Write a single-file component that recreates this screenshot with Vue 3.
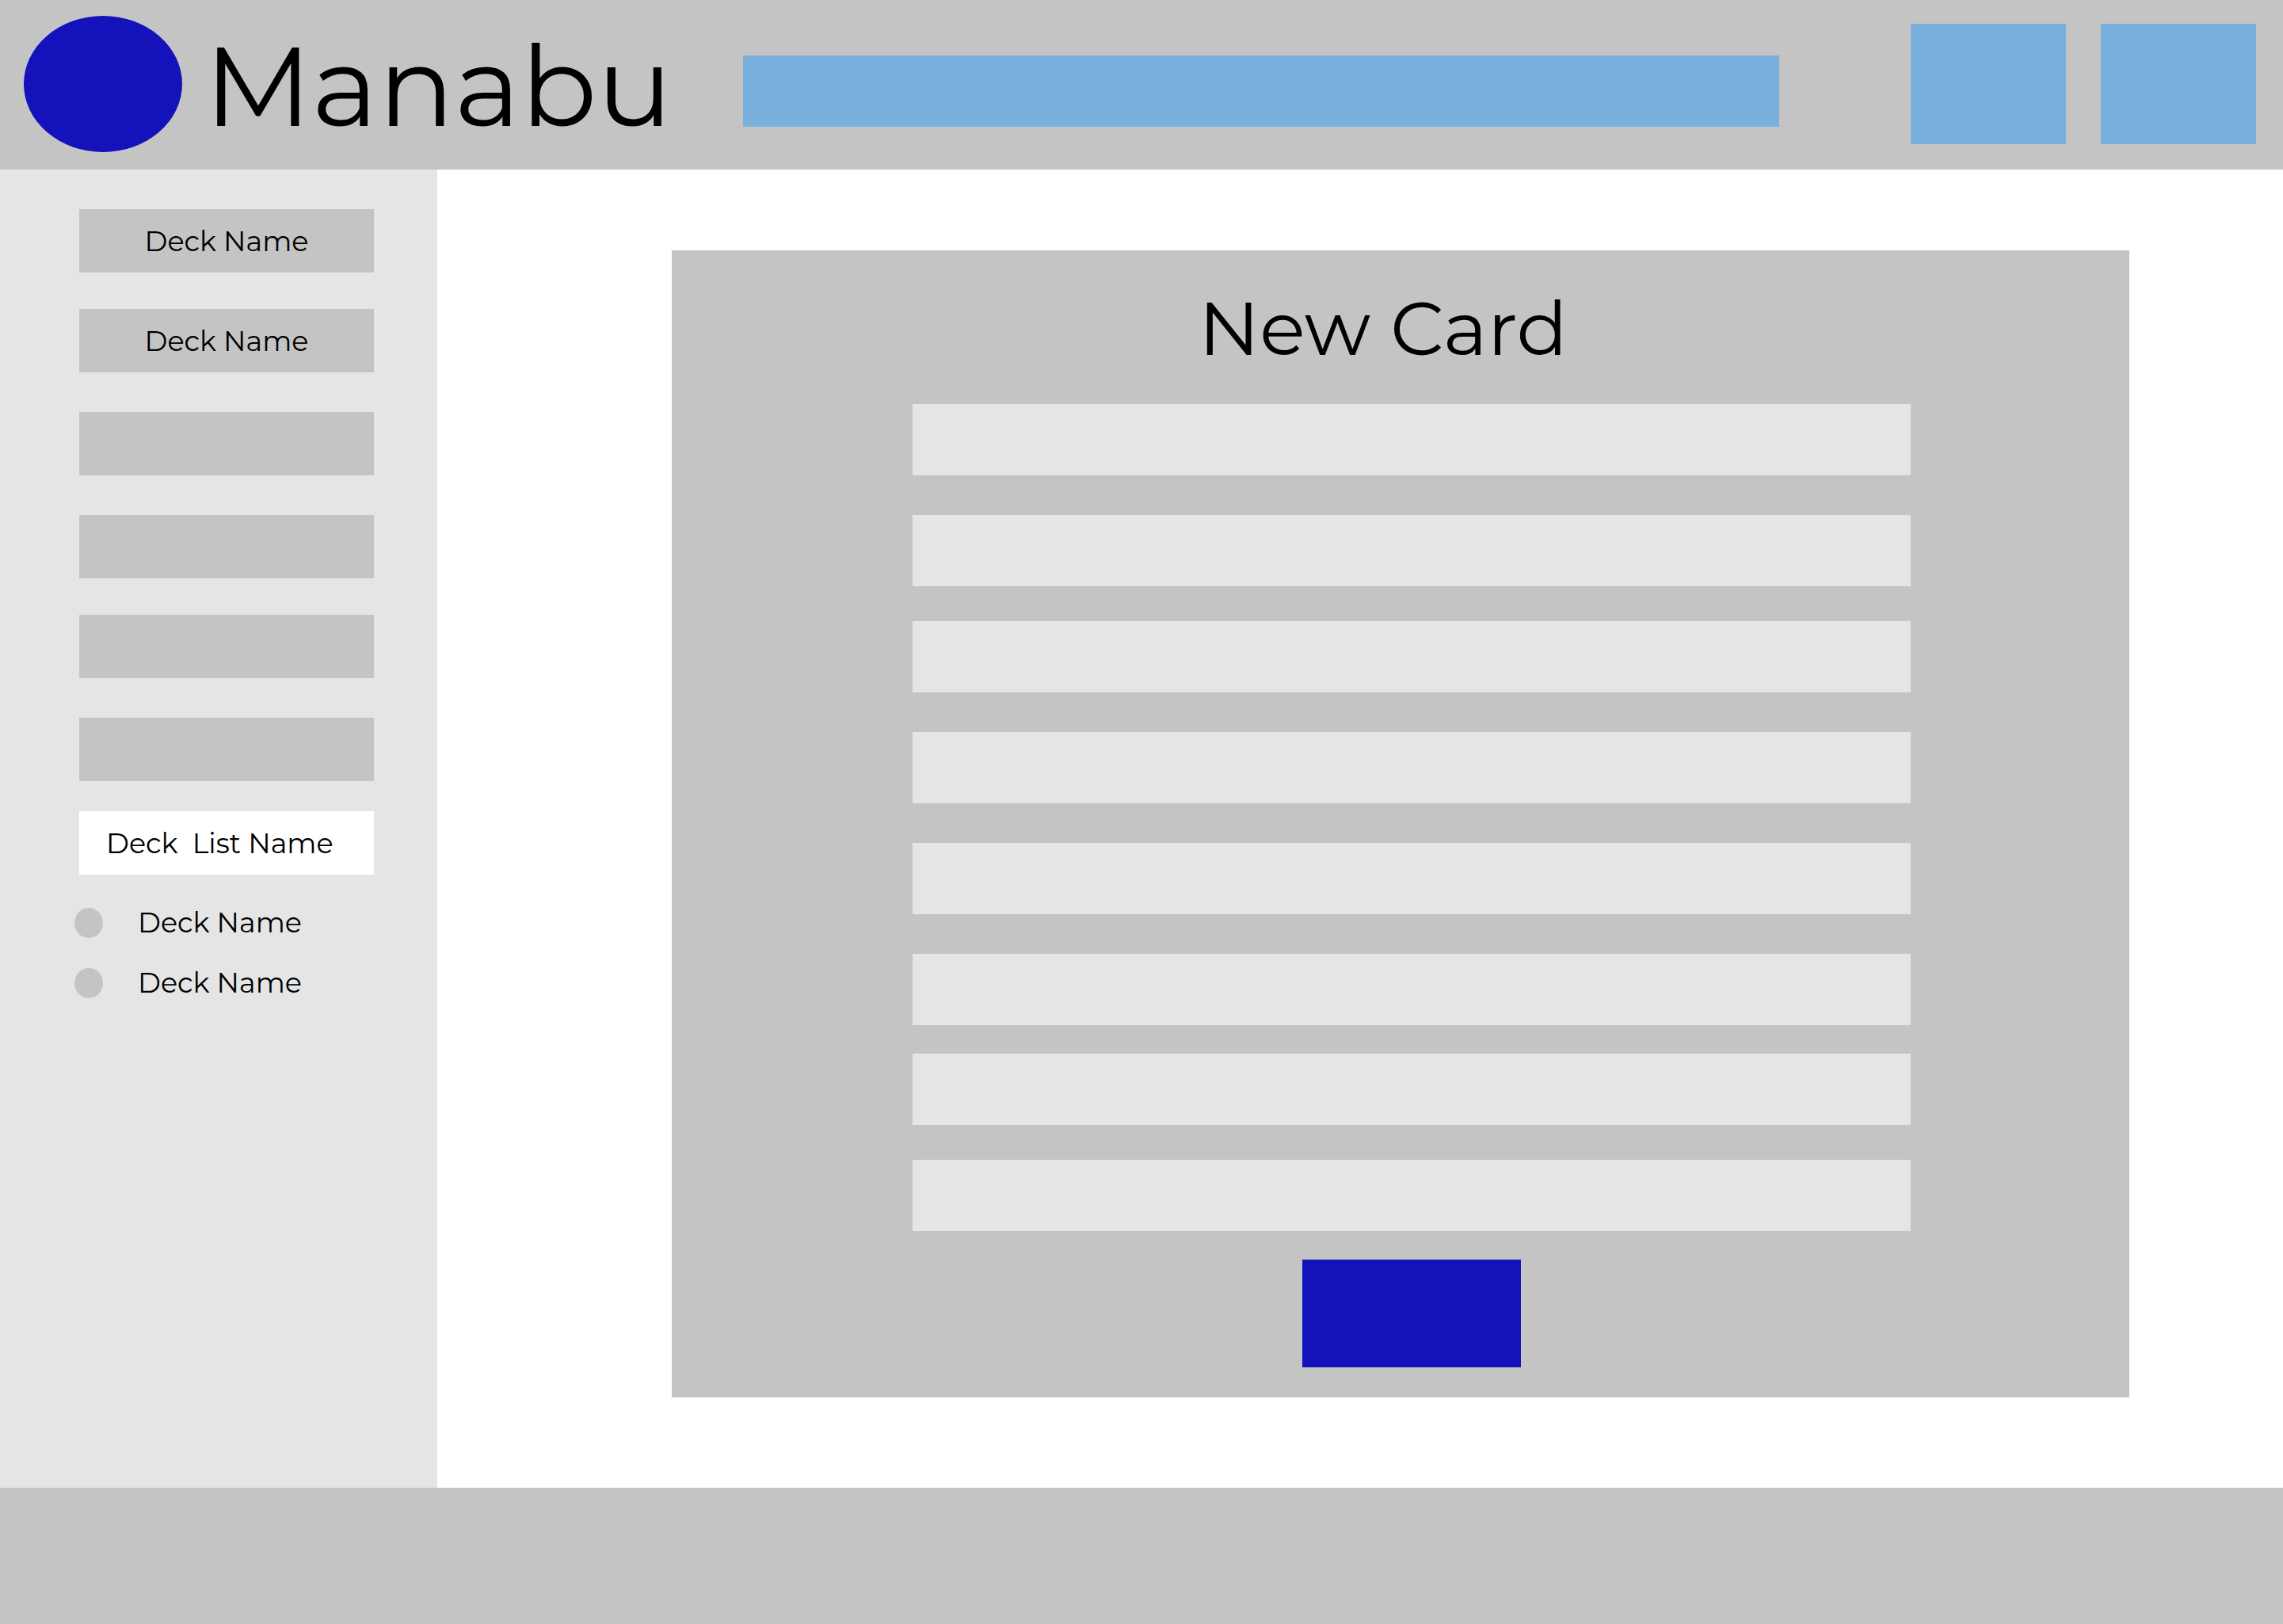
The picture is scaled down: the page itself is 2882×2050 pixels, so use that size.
<script setup>
const decks = [
  { name: 'Deck Name', space: 'mid' },
  { name: 'Deck Name', space: 'wide' },
  { name: '', space: 'wide' },
  { name: '', space: 'mid' },
  { name: '', space: 'wide' },
  { name: '', space: 'tight' },
]

const listDecks = ['Deck Name', 'Deck Name']

const fields = ['wide', 'mid', 'wide', 'wide', 'wide', 'tight', 'mid', 'tight']
</script>

<template>
  <div class="page">
    <header class="topbar">
      <a class="brand" href="#">
        <span class="logo"></span>
        <span class="brand-name">Manabu</span>
      </a>
      <input class="search" type="search" aria-label="Search" />
      <div class="actions">
        <button class="action" type="button" aria-label="Notifications"></button>
        <button class="action" type="button" aria-label="Account"></button>
      </div>
    </header>

    <div class="body">
      <nav class="sidebar" aria-label="Decks">
        <div class="decks">
          <button
            v-for="(deck, i) in decks"
            :key="i"
            type="button"
            class="deck"
            :class="deck.space"
            :aria-label="deck.name || 'Empty deck'"
          >{{ deck.name }}</button>
          <button type="button" class="deck deck-list">{{ 'Deck  List Name' }}</button>
        </div>
        <ul class="list">
          <li v-for="(name, i) in listDecks" :key="i" class="list-row">
            <span class="bullet"></span>
            <a class="list-link" href="#">{{ name }}</a>
          </li>
        </ul>
      </nav>

      <main class="content">
        <form class="card" @submit.prevent>
          <h1 class="title">New Card</h1>
          <input
            v-for="(space, i) in fields"
            :key="i"
            type="text"
            class="field"
            :class="space"
            :aria-label="`Field ${i + 1}`"
          />
          <button class="submit" type="submit" aria-label="Save card"></button>
        </form>
      </main>
    </div>

    <footer class="footer"></footer>
  </div>
</template>

<style>
body {
  margin: 0;
  background: #ffffff;
}
</style>

<style scoped>
.page {
  display: flex;
  flex-direction: column;
  min-height: 100vh;
  font-family: Montserrat, Inter, "Open Sans", sans-serif;
  font-weight: 400;
  color: #000000;
}

button,
input {
  box-sizing: border-box;
  margin: 0;
  padding: 0;
  border: 0;
  border-radius: 0;
  font: inherit;
  color: inherit;
  appearance: none;
}

a {
  color: inherit;
  text-decoration: none;
}

.topbar {
  display: flex;
  align-items: center;
  padding: 20px 34px 22px 30px;
  background: #c4c4c4;
}

.brand {
  display: flex;
  align-items: center;
  flex: none;
  gap: 28px;
  width: 908px;
}

.logo {
  flex: none;
  width: 200px;
  height: 172px;
  border-radius: 50%;
  background: #1412bb;
}

.brand-name {
  padding-top: 6px;
  font-size: 142px;
  line-height: 166px;
}

.search {
  flex: 1;
  min-width: 0;
  height: 90px;
  margin: 18px 166px 0 0;
  background: #7ab0de;
}

.actions {
  display: flex;
  gap: 44px;
}

.action {
  width: 196px;
  height: 152px;
  background: #7ab0de;
}

.body {
  display: flex;
  flex: 1;
}

.sidebar {
  flex: none;
  box-sizing: border-box;
  width: 552px;
  padding: 50px 80px 50px 94px;
  background: #e5e5e5;
  font-size: 35px;
}

.decks {
  display: flex;
  flex-direction: column;
  padding-left: 6px;
}

.deck {
  height: 80px;
  background: #c4c4c4;
  text-align: center;
}

.deck.wide,
.field.wide {
  margin-bottom: 50px;
}

.deck.mid {
  margin-bottom: 46px;
}

.deck.tight {
  margin-bottom: 38px;
}

.deck-list {
  padding-left: 34px;
  background: #ffffff;
  text-align: left;
  white-space: pre;
}

.list {
  display: flex;
  flex-direction: column;
  gap: 38px;
  margin: 42px 0 0;
  padding: 0;
  list-style: none;
}

.list-row {
  display: flex;
  align-items: center;
  gap: 44px;
}

.bullet {
  width: 36px;
  height: 38px;
  border-radius: 50%;
  background: #c4c4c4;
}

.list-link {
  line-height: 38px;
}

.content {
  flex: 1;
  min-width: 0;
  padding: 102px 194px 114px 296px;
}

.card {
  display: flex;
  flex-direction: column;
  padding: 38px 276px 38px 304px;
  background: #c4c4c4;
}

.title {
  margin: 0 72px 36px 0;
  font-size: 95px;
  font-weight: 400;
  line-height: 120px;
  text-align: center;
}

.field {
  width: 100%;
  height: 90px;
  background: #e5e5e5;
}

.field.mid {
  margin-bottom: 44px;
}

.field.tight {
  margin-bottom: 36px;
}

.submit {
  align-self: center;
  width: 276px;
  height: 136px;
  background: #1412bb;
}

.footer {
  height: 172px;
  background: #c4c4c4;
}
</style>
